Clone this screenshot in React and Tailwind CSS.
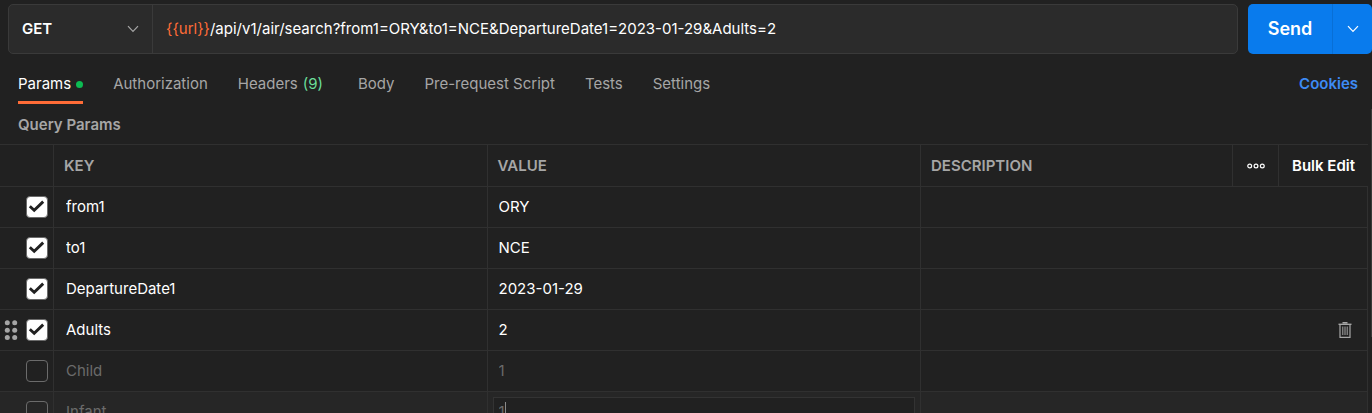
import { useState } from "react";

const tabs = ["Params", "Authorization", "Headers", "Body", "Pre-request Script", "Tests", "Settings"];

const initialParams = [
  { key: "from1", value: "ORY", enabled: true },
  { key: "to1", value: "NCE", enabled: true },
  { key: "DepartureDate1", value: "2023-01-29", enabled: true },
  { key: "Adults", value: "2", enabled: true, hovered: true },
  { key: "Child", value: "1", enabled: false },
  { key: "Infant", value: "1", enabled: false, editing: true },
];

function Chevron({ className }) {
  return (
    <svg className={className} width="12" height="8" viewBox="0 0 12 8" fill="none" stroke="currentColor" strokeWidth="1.2">
      <path d="M1 1.2 6 6.4 11 1.2" />
    </svg>
  );
}

function DragHandle() {
  return (
    <svg width="14" height="22" viewBox="0 0 14 22" fill="#a6a6a6">
      <circle cx="3.3" cy="3.8" r="2.5" />
      <circle cx="10.7" cy="3.8" r="2.5" />
      <circle cx="3.3" cy="11.2" r="2.5" />
      <circle cx="10.7" cy="11.2" r="2.5" />
      <circle cx="3.3" cy="18.6" r="2.5" />
      <circle cx="10.7" cy="18.6" r="2.5" />
    </svg>
  );
}

function TrashIcon() {
  return (
    <svg width="14" height="16" viewBox="0 0 14 16" fill="none" stroke="#a6a6a6">
      <path d="M4.5 .8h5" strokeWidth="1.6" />
      <path d="M.5 2.3h13" strokeWidth="1.4" />
      <path d="M2 3v12.3h10V3" strokeWidth="1.2" />
      <path d="M4.8 4.5V13M7 4.5V13M9.2 4.5V13" />
    </svg>
  );
}

function RequestBar() {
  const [path, setPath] = useState("/api/v1/air/search?from1=ORY&to1=NCE&DepartureDate1=2023-01-29&Adults=2");

  return (
    <div className="flex h-[50px] gap-[10px] pl-2">
      <div className="flex min-w-0 flex-1 rounded-[5px] border border-[#3a3a3a] bg-[#2b2b2b]">
        <div className="relative flex w-36 shrink-0 border-r border-[#3a3a3a]">
          <select aria-label="Method" className="w-full cursor-pointer appearance-none bg-transparent pl-[13px] font-semibold text-white outline-none">
            <option>GET</option>
            <option>POST</option>
            <option>PUT</option>
            <option>DELETE</option>
          </select>
          <Chevron className="pointer-events-none absolute top-5 right-[13px] text-[#a6a6a6]" />
        </div>
        <div className="flex min-w-0 flex-1 items-center pl-[13px]">
          <span className="text-[#ff6c37]">{"{{url}}"}</span>
          <input
            aria-label="Request URL"
            className="min-w-0 flex-1 bg-transparent text-white outline-none"
            value={path}
            onChange={(e) => setPath(e.target.value)}
          />
        </div>
      </div>

      <div className="flex overflow-hidden rounded-[5px] bg-[#097bed] text-white">
        <button className="w-[84px] cursor-pointer text-lg font-semibold">Send</button>
        <button aria-label="Send options" className="flex w-10 cursor-pointer items-center justify-center border-l border-[#086fd6]">
          <Chevron />
        </button>
      </div>
    </div>
  );
}

function Tabs() {
  const [active, setActive] = useState("Params");

  return (
    <div className="flex items-start justify-between pr-[14px] pl-[18px]">
      <nav className="flex gap-[30px]">
        {tabs.map((tab) => (
          <button
            key={tab}
            onClick={() => setActive(tab)}
            className={`flex h-[50px] cursor-pointer items-center gap-[5px] border-b-[3px] pt-[13px] whitespace-nowrap ${
              active === tab ? "border-[#ff6c37] text-white" : "border-transparent text-[#a6a6a6]"
            }`}
          >
            {tab}
            {tab === "Params" && <span className="h-[7px] w-[7px] rounded-full bg-[#0cbb52]" />}
            {tab === "Headers" && <span className="pr-[5px] text-[#6bdd9a]">(9)</span>}
          </button>
        ))}
      </nav>
      <a href="#cookies" className="flex h-[50px] items-center pt-[10px] font-semibold text-[#3d8bf5]">
        Cookies
      </a>
    </div>
  );
}

function ParamRow({ param, onChange }) {
  const cell = "h-[41px] border-r border-b border-[#303030] p-0";
  const text = param.enabled ? "text-white" : "text-[#6b6b6b]";

  return (
    <tr className={param.editing ? "bg-[#262626]" : ""}>
      <td className={cell}>
        <div className="flex items-center justify-end gap-2 pr-[5px]">
          {param.hovered && <DragHandle />}
          <label className="relative block h-[22px] w-[22px]">
            <input
              type="checkbox"
              aria-label={param.key}
              checked={param.enabled}
              onChange={(e) => onChange({ enabled: e.target.checked })}
              className="block h-[22px] w-[22px] cursor-pointer appearance-none rounded-[4px] border border-[#6b6b6b] checked:bg-white"
            />
            {param.enabled && (
              <svg className="pointer-events-none absolute inset-0" width="22" height="22" viewBox="0 0 22 22" fill="none" stroke="#212121" strokeWidth="2.9">
                <path d="M3.8 10.2 8.2 14.2 17.2 5.6" />
              </svg>
            )}
          </label>
        </div>
      </td>
      <td className={cell}>
        <input
          aria-label="Key"
          className={`block w-full bg-transparent px-3 outline-none ${text}`}
          value={param.key}
          onChange={(e) => onChange({ key: e.target.value })}
        />
      </td>
      <td className={cell}>
        {param.editing ? (
          <div className="mx-[5px] flex h-[30px] items-center border border-[#333333] bg-[#212121] pl-[5px]">
            <input
              aria-label="Value"
              className={`bg-transparent outline-none [field-sizing:content] ${text}`}
              value={param.value}
              onChange={(e) => onChange({ value: e.target.value })}
            />
            <span className="h-5 w-px bg-[#8a8a8a]" />
          </div>
        ) : (
          <input
            aria-label="Value"
            className={`block w-full bg-transparent px-[11px] outline-none ${text}`}
            value={param.value}
            onChange={(e) => onChange({ value: e.target.value })}
          />
        )}
      </td>
      <td className={cell} colSpan={3}>
        <div className="flex items-center pr-[15px]">
          <input aria-label="Description" className="min-w-0 flex-1 bg-transparent px-[11px] text-white outline-none" />
          {param.hovered && (
            <button aria-label="Delete param" className="cursor-pointer">
              <TrashIcon />
            </button>
          )}
        </div>
      </td>
    </tr>
  );
}

function ParamsTable() {
  const [params, setParams] = useState(initialParams);

  const updateParam = (index, changes) => {
    setParams(params.map((p, i) => (i === index ? { ...p, ...changes } : p)));
  };

  const head = "h-[42px] border-r border-b border-[#303030] px-[10px] py-0 font-semibold";

  return (
    <table className="w-full table-fixed border-separate border-spacing-0 border-t border-[#303030] text-left">
      <colgroup>
        <col className="w-[54px]" />
        <col />
        <col />
        <col className="w-[312px]" />
        <col className="w-[46px]" />
        <col className="w-[89px]" />
      </colgroup>
      <thead className="text-[#a6a6a6]">
        <tr>
          <th className={head} aria-label="Enabled" />
          <th className={head}>KEY</th>
          <th className={head}>VALUE</th>
          <th className={head}>DESCRIPTION</th>
          <th className="border-r border-b border-[#303030] p-0">
            <button aria-label="Table options" className="flex w-full cursor-pointer justify-center">
              <svg width="18" height="6" viewBox="0 0 18 6" fill="none" stroke="#ffffff" strokeWidth="1.2">
                <circle cx="2.7" cy="3" r="1.9" />
                <circle cx="9" cy="3" r="1.9" />
                <circle cx="15.3" cy="3" r="1.9" />
              </svg>
            </button>
          </th>
          <th className="border-b border-[#303030] p-0">
            <button className="w-full cursor-pointer font-semibold whitespace-nowrap text-white">Bulk Edit</button>
          </th>
        </tr>
      </thead>
      <tbody>
        {params.map((param, i) => (
          <ParamRow key={i} param={param} onChange={(changes) => updateParam(i, changes)} />
        ))}
      </tbody>
    </table>
  );
}

function App() {
  return (
    <div className="flex h-screen flex-col overflow-hidden bg-[#212121] pt-1 font-['Inter',sans-serif] text-[15px] leading-5">
      <RequestBar />
      <Tabs />
      <div className="flex min-h-0 flex-1 pt-[5px]">
        <main className="min-w-0 flex-1">
          <h2 className="h-[35px] pt-[6px] pl-[18px] font-semibold text-[#a6a6a6]">Query Params</h2>
          <ParamsTable />
        </main>
        {/* scrollbar */}
        <div className="flex w-1 justify-end">
          <div className="h-3/4 w-px bg-[#3a3a3a]" />
        </div>
      </div>
    </div>
  );
}

export default App;
